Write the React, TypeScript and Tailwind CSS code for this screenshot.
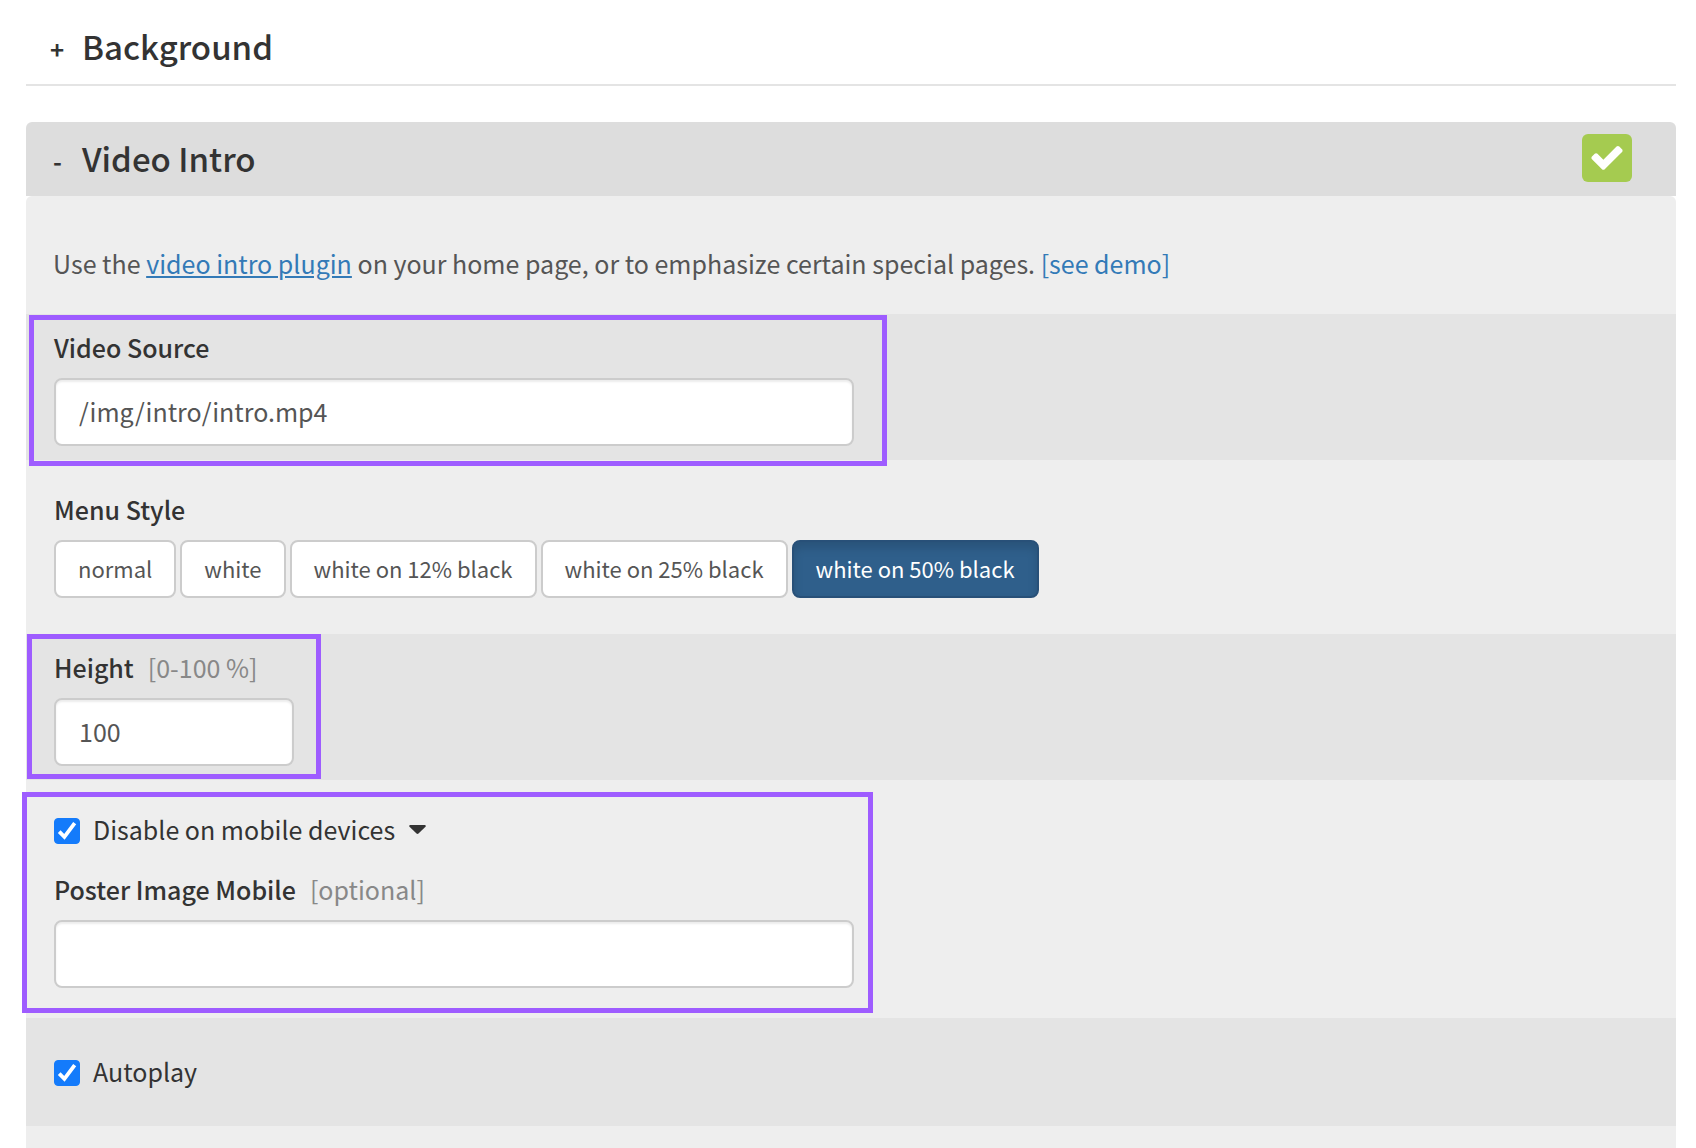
import { useState } from 'react';
import type { ReactNode } from 'react';

const MENU_STYLES = ['normal', 'white', 'white on 12% black', 'white on 25% black', 'white on 50% black'];

const INPUT =
  'block h-[68px] rounded-lg border-2 border-[#ccc] bg-white px-[23px] pb-0.5 text-[25px] text-[#555] shadow-[inset_0_2px_2px_rgba(0,0,0,0.075)] outline-none';

interface CheckboxProps {
  id: string;
  defaultChecked?: boolean;
  children: ReactNode;
}

const Checkbox = ({ id, defaultChecked, children }: CheckboxProps) => (
  <div className="flex h-[38px] items-center">
    <span className="grid size-[26px] shrink-0">
      <input
        id={id}
        type="checkbox"
        defaultChecked={defaultChecked}
        className="peer col-start-1 row-start-1 size-[26px] appearance-none rounded border border-[#999] bg-white checked:border-[#147bfb] checked:bg-[#147bfb]"
      />
      <svg
        viewBox="0 0 26 26"
        className="pointer-events-none invisible col-start-1 row-start-1 size-[26px] peer-checked:visible"
        fill="none"
        stroke="#fff"
        strokeWidth="3.8"
      >
        <path d="M5.2 13.6l5.2 5.2L20.7 5.2" />
      </svg>
    </span>
    <label htmlFor={id} className="pb-1 pl-[13px] text-[25px] leading-8 text-[#333]">
      {children}
    </label>
  </div>
);

interface FieldLabelProps {
  htmlFor: string;
  hint?: string;
  children: ReactNode;
}

const FieldLabel = ({ htmlFor, hint, children }: FieldLabelProps) => (
  <label htmlFor={htmlFor} className="mb-3.5 block text-[25px] leading-[34px] font-medium text-[#333]">
    {children}
    {hint && <span className="ml-3.5 font-normal text-[#888]">{hint}</span>}
  </label>
);

// Purple outline drawn over the settings that matter
const Highlight = ({ className }: { className: string }) => (
  <div className={`pointer-events-none absolute z-10 border-5 border-[#9e5cff] ${className}`} />
);

export default function App() {
  const [menuStyle, setMenuStyle] = useState('white on 50% black');
  const [open, setOpen] = useState(true);

  return (
    <div className="min-h-screen overflow-hidden bg-white pr-5 pl-[26px] font-['Noto_Sans_CJK_SC','Source_Sans_Pro',sans-serif]">
      {/* Collapsed section */}
      <h2 className="mb-9 border-b-2 border-[#e4e4e4] pt-[22px] pb-3.5 text-[#333]">
        <button type="button" className="flex h-12 w-full items-center pl-6 text-left">
          <span className="w-8 pt-1.5 text-[24px] leading-8 font-bold">+</span>
          <span className="text-[33px] leading-12 font-medium">Background</span>
        </button>
      </h2>

      {/* Expanded section */}
      <div className="flex items-center rounded-t-md bg-[#ddd] pt-3 pr-11 pb-3.5 text-[#333]">
        <h2 className="flex-1">
          <button
            type="button"
            aria-expanded={open}
            onClick={() => setOpen(!open)}
            className="flex h-12 w-full items-center pl-[27px] text-left"
          >
            <span className="w-[29px] pt-1.5 text-[24px] leading-8 font-bold">-</span>
            <span className="text-[33px] leading-12 font-medium">Video Intro</span>
          </button>
        </h2>
        <button
          type="button"
          aria-label="Video Intro enabled"
          className="flex h-12 w-[50px] items-center justify-center rounded-md bg-[#a5cb50]"
        >
          <svg viewBox="0 0 1792 1792" className="size-9" fill="#fff">
            <path d="M1671 530q0 40-28 68l-724 724-136 136q-28 28-68 28t-68-28l-136-136-362-362q-28-28-28-68t28-68l136-136q28-28 68-28t68 28l294 295 656-657q28-28 68-28t68 28l136 136q28 28 28 68z" />
          </svg>
        </button>
      </div>

      {open && (
        <div className="rounded-t-md bg-[#eee]">
          <p className="px-[27px] pt-[49px] pb-[33px] text-[25px] leading-9 text-[#555]">
            Use the{' '}
            <a href="#plugin" className="text-[#337ab7] underline">
              video intro plugin
            </a>{' '}
            on your home page, or to emphasize certain special pages.{' '}
            <a href="#demo" className="text-[#337ab7]">
              [see demo]
            </a>
          </p>

          <div className="relative bg-[#e4e4e4] px-7 pt-4 pb-3.5">
            <FieldLabel htmlFor="source">Video Source</FieldLabel>
            <input id="source" type="text" defaultValue="/img/intro/intro.mp4" className={`${INPUT} w-full max-w-[800px]`} />
            <Highlight className="top-px left-[3px] h-[151px] w-[858px]" />
          </div>

          <div className="px-7 pt-8 pb-9">
            <h3 className="mb-3.5 text-[25px] leading-[34px] font-medium text-[#333]">Menu Style</h3>
            <div className="flex flex-wrap gap-1">
              {MENU_STYLES.map((style) => (
                <button
                  key={style}
                  type="button"
                  aria-pressed={style === menuStyle}
                  onClick={() => setMenuStyle(style)}
                  className={`h-[58px] rounded-lg border-2 px-[22px] pb-0.5 text-[22px] leading-8 ${
                    style === menuStyle
                      ? 'border-[#285078] bg-[#2f5f8b] text-white shadow-[inset_0_6px_10px_rgba(0,0,0,0.125)]'
                      : 'border-[#ccc] bg-white text-[#555]'
                  }`}
                >
                  {style}
                </button>
              ))}
            </div>
          </div>

          <div className="relative bg-[#e4e4e4] px-7 pt-4 pb-3.5">
            <FieldLabel htmlFor="height" hint="[0-100 %]">
              Height
            </FieldLabel>
            <input id="height" type="text" defaultValue="100" className={`${INPUT} w-60`} />
            <Highlight className="top-0 left-px h-[145px] w-[294px]" />
          </div>

          <div className="relative px-7 pt-8 pb-[30px]">
            <Checkbox id="mobile" defaultChecked>
              <span className="flex items-center gap-3.5">
                Disable on mobile devices
                <svg viewBox="0 0 17 9" className="h-[9px] w-[17px]" fill="#333">
                  <path d="M1 0h15q1.4.6.5 1.7L9.5 8.5q-1 .8-2 0L.5 1.7Q-.4.6 1 0z" />
                </svg>
              </span>
            </Checkbox>
            <div className="pt-[22px]">
              <FieldLabel htmlFor="poster" hint="[optional]">
                Poster Image Mobile
              </FieldLabel>
              <input id="poster" type="text" className={`${INPUT} w-full max-w-[800px]`} />
            </div>
            <Highlight className="top-3 -left-1 h-[221px] w-[851px]" />
          </div>

          <div className="bg-[#e4e4e4] px-7 pt-9 pb-[34px]">
            <Checkbox id="autoplay" defaultChecked>
              Autoplay
            </Checkbox>
          </div>
          <div className="h-[22px]" />
        </div>
      )}
    </div>
  );
}
